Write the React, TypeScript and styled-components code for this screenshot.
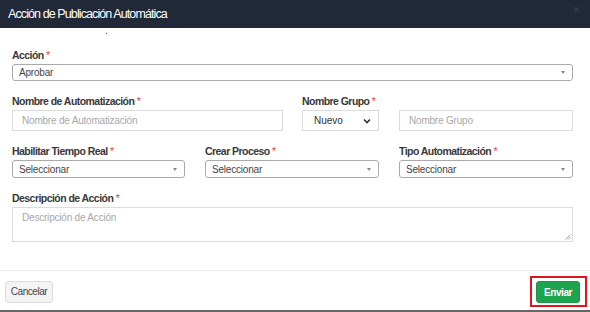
import styled, { createGlobalStyle } from "styled-components";

const GlobalStyle = createGlobalStyle`
    html, body {
        margin: 0;
        padding: 0;
        background: #ffffff;
        font-family: "Liberation Sans", Arial, sans-serif;
    }
`;

const Modal = styled.div`
    width: 590px;
    height: 312px;
    background: #ffffff;
    display: flex;
    flex-direction: column;
`;

const Header = styled.div`
    height: 28px;
    background: #212838;
    display: flex;
    align-items: center;
    justify-content: space-between;
    padding: 0 10px 0 8px;
    box-sizing: border-box;
    flex-shrink: 0;
`;

const Title = styled.h4`
    margin: 0;
    color: #ffffff;
    font-size: 12.5px;
    font-weight: normal;
    letter-spacing: -0.9px;
`;

const Close = styled.span`
    color: #3a4254;
    font-size: 12px;
    line-height: 1;
    margin-top: -8px;
`;

const Body = styled.div`
    padding: 21px 17px 26px 12px;
    display: flex;
    flex-direction: column;
    gap: 14px;
    position: relative;
`;

const Dot = styled.span`
    position: absolute;
    left: 106px;
    top: 5px;
    width: 1px;
    height: 1px;
    background: #3b46c8;
`;

const Row = styled.div<{ cols: string; gap: number }>`
    display: grid;
    grid-template-columns: ${(p) => p.cols};
    column-gap: ${(p) => p.gap}px;
`;

const Group = styled.div`
    display: flex;
    flex-direction: column;
    gap: 2px;
    min-width: 0;
`;

const Label = styled.label`
    font-size: 10.5px;
    line-height: 13px;
    font-weight: bold;
    color: #383838;
    letter-spacing: -0.55px;

    &::after {
        content: " *";
        color: #e0404a;
        font-weight: normal;
    }
`;

const SelectBox = styled.div<{ h: number }>`
    height: ${(p) => p.h}px;
    border: 1px solid #aaaaaa;
    border-radius: 3px;
    box-sizing: border-box;
    display: flex;
    align-items: center;
    justify-content: space-between;
    padding: 0 6px 0 6px;
    font-size: 10px;
    color: #444444;
    letter-spacing: -0.2px;
`;

const Caret = styled.span`
    width: 0;
    height: 0;
    border-left: 2.5px solid transparent;
    border-right: 2.5px solid transparent;
    border-top: 3px solid #888888;
    margin-right: 1px;
`;

const Input = styled.div<{ h: number }>`
    height: ${(p) => p.h}px;
    border: 1px solid #dcdcdc;
    box-sizing: border-box;
    display: flex;
    align-items: center;
    padding: 0 9px;
    font-size: 10px;
    color: #a8a8a8;
    letter-spacing: -0.2px;
`;

const Inline = styled.div`
    display: grid;
    grid-template-columns: 77px 1fr;
    column-gap: 20px;
`;

const NativeSelect = styled.div`
    height: 21px;
    border: 1px solid #dcdcdc;
    box-sizing: border-box;
    display: flex;
    align-items: center;
    justify-content: space-between;
    padding: 0 7px 0 11px;
    font-size: 10px;
    color: #333333;
`;

const TextArea = styled.div`
    height: 35px;
    border: 1px solid #dcdcdc;
    box-sizing: border-box;
    padding: 4px 9px;
    font-size: 10px;
    color: #a8a8a8;
    letter-spacing: -0.2px;
    position: relative;
`;

const Grip = styled.svg`
    position: absolute;
    right: 1px;
    bottom: 1px;
`;

const Footer = styled.div`
    margin-top: auto;
    border-top: 1px solid #ececec;
    border-bottom: 2px solid #666666;
    padding: 5px 3px 3px 5px;
    display: flex;
    align-items: center;
    justify-content: space-between;
`;

const Button = styled.button`
    height: 22px;
    padding: 0;
    border-radius: 3px;
    font-family: "Liberation Sans", Arial, sans-serif;
    font-size: 10px;
    letter-spacing: -0.45px;
    cursor: pointer;
`;

const CancelButton = styled(Button)`
    background: #f4f4f4;
    border: 1px solid #dddddd;
    color: #444444;
    width: 48px;
`;

const Highlight = styled.div`
    border: 2px solid #e3131c;
    padding: 3px 5px 2px 4px;
    display: flex;
`;

const SendButton = styled(Button)`
    background: #1ea350;
    border: 1px solid #1a9548;
    color: #ffffff;
    font-weight: bold;
    width: 44px;
`;

function Chevron() {
    return (
        <svg width="8" height="6" viewBox="0 0 8 6">
            <path d="M1 1.5 L4 4.5 L7 1.5" fill="none" stroke="#333" strokeWidth="1.6" />
        </svg>
    );
}

export default function App() {
    return (
        <>
            <GlobalStyle />
            <Modal>
                <Header>
                    <Title>Acción de Publicación Automática</Title>
                    <Close>×</Close>
                </Header>
                <Body>
                    <Dot />
                    <Group>
                        <Label>Acción</Label>
                        <SelectBox h={17}>
                            Aprobar
                            <Caret />
                        </SelectBox>
                    </Group>
                    <Row cols="271px 271px" gap={19}>
                        <Group>
                            <Label>Nombre de Automatización</Label>
                            <Input h={21}>Nombre de Automatización</Input>
                        </Group>
                        <Group>
                            <Label>Nombre Grupo</Label>
                            <Inline>
                                <NativeSelect>
                                    Nuevo
                                    <Chevron />
                                </NativeSelect>
                                <Input h={21}>Nombre Grupo</Input>
                            </Inline>
                        </Group>
                    </Row>
                    <Row cols="173px 174px 174px" gap={20}>
                        <Group>
                            <Label>Habilitar Tiempo Real</Label>
                            <SelectBox h={18}>
                                Seleccionar
                                <Caret />
                            </SelectBox>
                        </Group>
                        <Group>
                            <Label>Crear Proceso</Label>
                            <SelectBox h={18}>
                                Seleccionar
                                <Caret />
                            </SelectBox>
                        </Group>
                        <Group>
                            <Label>Tipo Automatización</Label>
                            <SelectBox h={18}>
                                Seleccionar
                                <Caret />
                            </SelectBox>
                        </Group>
                    </Row>
                    <Group>
                        <Label>Descripción de Acción</Label>
                        <TextArea>
                            Descripción de Acción
                            <Grip width="6" height="6" viewBox="0 0 6 6">
                                <path d="M5.5 0.5 L0.5 5.5 M5.5 3 L3 5.5" stroke="#888" strokeWidth="0.8" />
                            </Grip>
                        </TextArea>
                    </Group>
                </Body>
                <Footer>
                    <CancelButton>Cancelar</CancelButton>
                    <Highlight>
                        <SendButton>Enviar</SendButton>
                    </Highlight>
                </Footer>
            </Modal>
        </>
    );
}
